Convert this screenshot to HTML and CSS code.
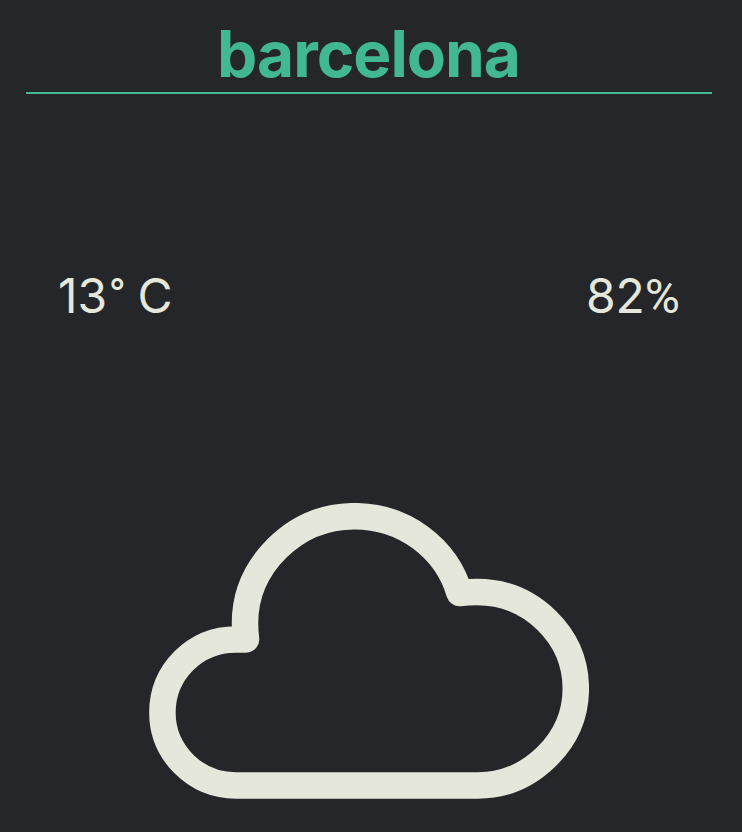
FILE: index.html
```html
<!DOCTYPE html>
<html lang="en">
<head>
<meta charset="utf-8">
<title>Weather</title>
<link rel="stylesheet" href="styles.css">
</head>
<body>
<main class="weather">
<h1 class="city">barcelona</h1>
<div class="readings"><span class="temperature">13<span class="unit">°</span> C</span><span class="humidity">82<span class="unit">%</span></span></div>
<svg class="cloud" viewBox="149 503 440 296" aria-hidden="true">
<path d="M246 639.400H236Q205 639.400 183.700 660.900T162.400 712.500Q162.400 742.500 183.900 764T236 785.500H478Q517 785.500 546.400 756.800T575.800 688.500Q575.800 649 546.700 620.500T477 592Q468 592 459.500 593Q449.500 559 420.500 537.600T354.500 516.200Q309.500 516.200 277.200 548.200T245 623.500Q245 631 246 639.400Z"/>
</svg>
</main>
</body>
</html>
```

FILE: styles.css
```css
body {
  margin: 0;
  background: #25262a;
  color: #e5e7da;
  font-family: Inter, sans-serif;
}

.weather {
  height: 832px;
  box-sizing: border-box;
  padding: 16px 30px 0 26px;
  overflow: hidden;
}

.city {
  height: 76px;
  margin: 0;
  border-bottom: 2px solid #41b893;
  color: #41b893;
  font-size: 64px;
  font-weight: 700;
  letter-spacing: -1px;
  line-height: 76px;
  text-align: center;
  text-indent: -1px;
}

.readings {
  display: flex;
  justify-content: space-between;
  height: 58px;
  margin-top: 173px;
  padding: 0 32px;
  font-size: 48px;
  line-height: 58px;
}

.unit {
  font-family: Roboto, sans-serif;
}

.temperature {
  word-spacing: -2px;
}

.temperature .unit {
  margin-left: 1px;
}

.cloud {
  display: block;
  width: 440px;
  height: 296px;
  margin: 178px auto 0;
}

.cloud path {
  fill: none;
  stroke: #e5e7da;
  stroke-width: 26.5;
  stroke-linecap: round;
  stroke-linejoin: round;
}
```
